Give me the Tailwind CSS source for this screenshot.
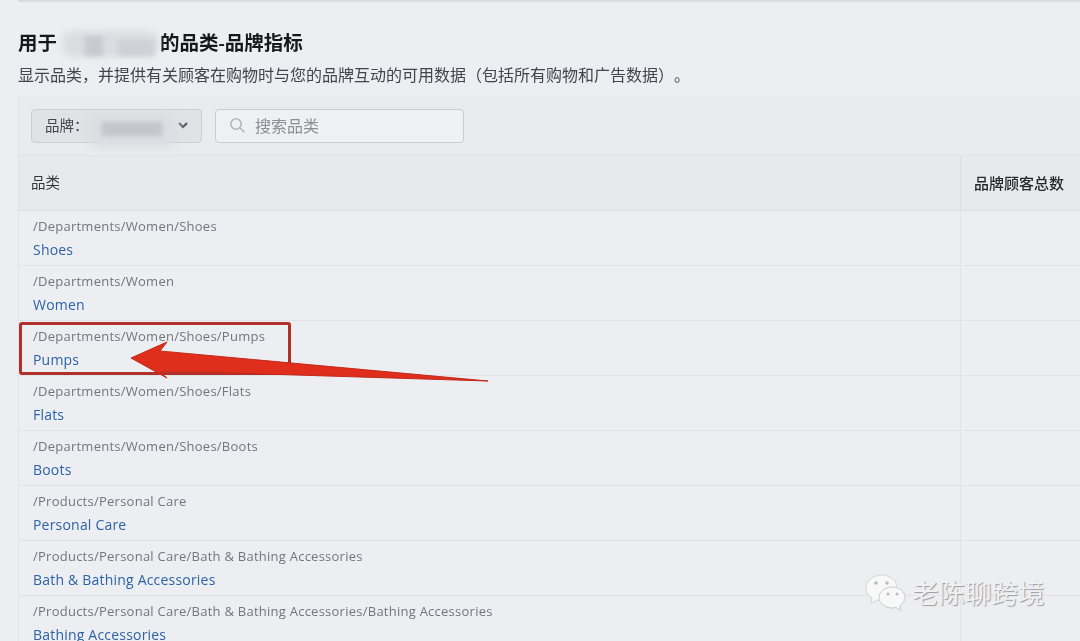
<!DOCTYPE html>
<html lang="zh">
<head>
  <meta charset="UTF-8" />
  <meta name="viewport" content="width=device-width, initial-scale=1.0" />
  <title>品类-品牌指标</title>
  <script src="https://cdn.jsdelivr.net/npm/@tailwindcss/browser@4"></script>
</head>
<body class="bg-[#eceef1] h-[641px] overflow-hidden relative font-['Open_Sans','Noto_Sans_CJK_SC',sans-serif] [text-spacing-trim:space-all]">
  <div class="h-[2px] ml-[18px] bg-[#d9dbde]"></div>

  <div class="pl-[18px] blur-[0.5px]">
    <h1 class="mt-[29px] text-[19.5px] leading-[24px] font-semibold text-[#16191c] flex whitespace-nowrap">
      <span>用于</span><span class="w-[103px]"></span><span>的品类-品牌指标</span>
    </h1>
    <p class="mt-[10px] text-[16px] leading-[20px] text-[#40464c] whitespace-nowrap">显示品类，并提供有关顾客在购物时与您的品牌互动的可用数据（包括所有购物和广告数据）。</p>

    <div class="mt-[11px] border-l border-[#e2e4e7]">
      <div class="h-[60px] bg-[#e9ebed] flex items-center gap-[13px] pl-[12px] border-b border-[#e1e3e6]">
        <div class="w-[171px] h-[34px] rounded-[4px] bg-[#e0e2e5] border border-[#cbced2] flex items-center justify-between pl-[13px] pr-[13px] text-[14.5px] text-[#40464c]">
          <span>品牌：</span>
          <svg width="10" height="7" viewBox="0 0 10 7" fill="none" stroke="#50565c" stroke-width="2"><path d="M1 1l4 4 4-4" /></svg>
        </div>
        <div class="w-[249px] h-[34px] rounded-[4px] bg-[#eef0f2] border border-[#c9ccd0] flex items-center gap-[9px] pl-[13px] text-[16px] text-[#8a8f95]">
          <svg width="17" height="17" viewBox="0 0 17 17" fill="none" stroke="#b4b7bb" stroke-width="1.6"><circle cx="7" cy="7" r="5.2" /><path d="M11 11l4.5 4.5" /></svg>
          <span>搜索品类</span>
        </div>
      </div>

      <div class="h-[55px] bg-[#e7e9eb] flex items-center border-b border-[#dcdee1] text-[14.5px] text-[#33383d]">
        <div class="w-[941px] pl-[12px] shrink-0">品类</div>
        <div class="h-full flex items-center pl-[13px] border-l border-[#dcdee1] text-[15px] font-medium text-[#25292d] whitespace-nowrap">品牌顾客总数</div>
      </div>

      <div id="rows"></div>
    </div>
  </div>

  <!-- 打码 -->
  <div class="absolute left-[62px] top-[31px] w-[96px] h-[26px] rounded-[10px] bg-[#dcdde1] blur-[3px]"></div>
  <div class="absolute left-[85px] top-[36px] w-[18px] h-[20px] bg-[#c9cacf] blur-[2px]"></div>
  <div class="absolute left-[118px] top-[40px] w-[36px] h-[16px] bg-[#d0d1d6] blur-[2px]"></div>
  <div class="absolute left-[88px] top-[114px] w-[90px] h-[34px] rounded-[14px] bg-[#dcdee2] blur-[4px]"></div>
  <div class="absolute left-[102px] top-[122px] w-[60px] h-[14px] bg-[#c4c6cb] blur-[2px]"></div>

  <!-- 红框和箭头 -->
  <div class="absolute left-[19px] top-[322px] w-[272px] h-[53px] border-[3px] border-[#b0302c] rounded-[3px]"></div>
  <svg class="absolute left-0 top-0" width="1080" height="641" viewBox="0 0 1080 641">
    <path d="M131 358L167 342L160 351L488 381L200 372L160 372L167 378Z" fill="#df2f1c" stroke="#c22a1b" stroke-width="1" />
  </svg>

  <!-- 水印 -->
  <div class="absolute left-[865px] top-[574px] flex items-center gap-[5px]">
    <svg width="42" height="38" viewBox="0 0 42 38">
      <path d="M17 1C8 1 1 7 1 14c0 4 2 7 6 10l-1 5 6-3c2 .5 3 .6 5 .6 8 0 15-6 15-13S25 1 17 1z" fill="#f8f8f9" stroke="#d4d6d9" />
      <path d="M27 13c-7 0-13 5-13 10.500S20 34 27 34c1.500 0 3-.2 4-.6l5 3-1-5c3-2 5-5 5-8 0-6-6-10.400-13-10.400z" fill="#f8f8f9" stroke="#c8cacd" />
      <circle cx="11" cy="9" r="1.800" fill="#bbb" /><circle cx="22" cy="9" r="1.800" fill="#bbb" />
      <circle cx="23" cy="20" r="1.500" fill="#bbb" /><circle cx="32" cy="20" r="1.500" fill="#bbb" />
    </svg>
    <span class="text-[26.5px] leading-[32px] text-[#f0f1f3] [text-shadow:1px_1px_1px_#9a9da2]">老陈聊跨境</span>
  </div>

  <script>
    const rows = [
      ["/Departments/Women/Shoes", "Shoes"],
      ["/Departments/Women", "Women"],
      ["/Departments/Women/Shoes/Pumps", "Pumps"],
      ["/Departments/Women/Shoes/Flats", "Flats"],
      ["/Departments/Women/Shoes/Boots", "Boots"],
      ["/Products/Personal Care", "Personal Care"],
      ["/Products/Personal Care/Bath & Bathing Accessories", "Bath & Bathing Accessories"],
      ["/Products/Personal Care/Bath & Bathing Accessories/Bathing Accessories", "Bathing Accessories"]
    ];

    const rowsEl = document.getElementById("rows");
    rows.forEach(row => {
      const el = document.createElement("div");
      el.className = "h-[55px] flex border-b border-[#e1e3e6]";
      el.innerHTML = `
        <div class="w-[941px] shrink-0 pl-[14px] pt-[6px]">
          <div class="path text-[13px] leading-[18px] text-[#72777d] tracking-[0.25px] whitespace-nowrap"></div>
          <div class="name mt-[5px] text-[14px] leading-[20px] text-[#2d62a8] tracking-[0.2px] whitespace-nowrap"></div>
        </div>
        <div class="flex-1 border-l border-[#e1e3e6]"></div>`;
      el.querySelector(".path").textContent = row[0];
      el.querySelector(".name").textContent = row[1];
      rowsEl.appendChild(el);
    });
  </script>
</body>
</html>
